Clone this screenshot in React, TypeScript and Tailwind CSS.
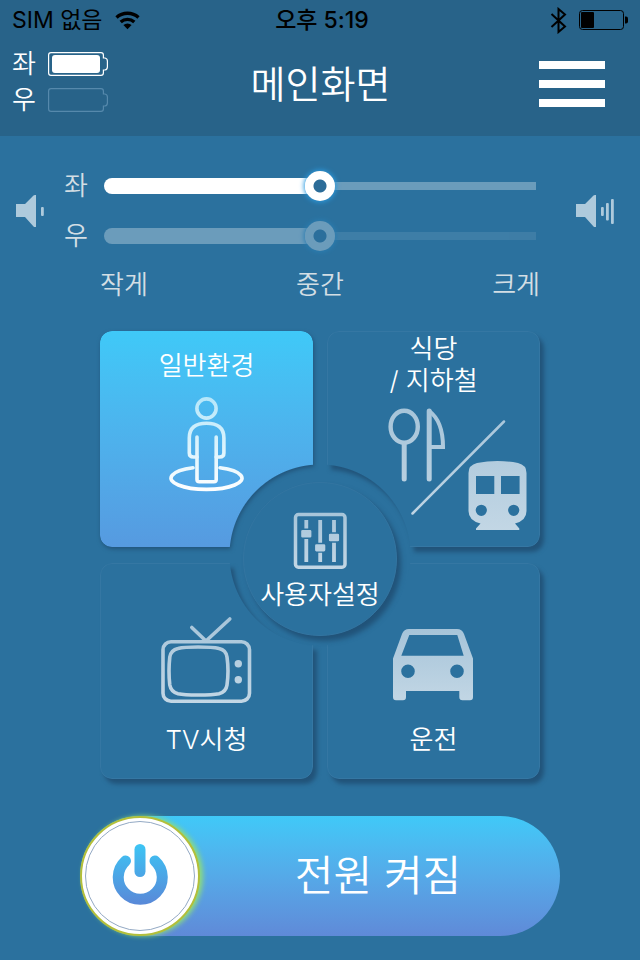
import { useState, type ReactNode } from 'react'
import clsx from 'clsx'

interface IconProps {
  id: string
  width: number
  height: number
  from?: string
  to?: string
  children: (paint: string) => ReactNode
}

// Icon with a vertical gradient shared by all of its strokes and fills
function Icon({ id, width, height, from = '#a6c4d9', to = '#c3d7e5', children }: IconProps) {
  return (
    <svg
      width={width}
      height={height}
      viewBox={`0 0 ${width} ${height}`}
      fill="none"
      strokeLinecap="round"
      strokeLinejoin="round"
      aria-hidden="true"
      className="shrink-0"
    >
      <defs>
        <linearGradient id={id} gradientUnits="userSpaceOnUse" x1="0" y1="0" x2="0" y2={height}>
          <stop stopColor={from} />
          <stop offset="1" stopColor={to} />
        </linearGradient>
      </defs>
      {children(`url(#${id})`)}
    </svg>
  )
}

function PersonIcon() {
  return (
    <Icon id="person" width={76} height={96} from="#b4e6fa" to="#ffffff">
      {(paint) => (
        <g stroke={paint} strokeWidth="3.6">
          <circle cx="37.5" cy="12.5" r="9.6" />
          <path d="M28 61H24.5Q20.300 61 20.300 57V42C20.300 31.500 26.500 27.200 37.500 27.200S54.900 31.500 54.900 42V57Q54.900 61 50.700 61H47.200" />
          <path d="M28 41V83.500Q28 85.800 30.300 85.800H44.900Q47.200 85.800 47.200 83.500V41" />
          <path d="M24 71.800A35.500 11.200 0 1 0 51 71.800" />
        </g>
      )}
    </Icon>
  )
}

function DiningSubwayIcon() {
  return (
    <Icon id="dining" width={144} height={128}>
      {(paint) => (
        <>
          <g stroke={paint} strokeWidth="4.4">
            <ellipse cx="18.200" cy="21.700" rx="13.600" ry="16" />
            <path d="M18.200 38.500V74" strokeWidth="5" />
            <path d="M43.200 6V74" strokeWidth="5" />
            <path d="M43.200 6C52 12.500 57 25.500 57 42H43.200" strokeWidth="4" strokeLinejoin="miter" />
          </g>
          <path d="M118 16.500L26.500 108.500" stroke={paint} strokeWidth="2.500" />
          <path
            fill={paint}
            fillRule="evenodd"
            d="M82.500 68Q82.500 60 91 58Q111.500 54.200 132 58Q140.500 60 140.500 68V106Q140.500 115.500 129 118.500L133.300 123.500V125H90V123.500L94.500 118.500Q82.500 115.500 82.500 106ZM90 71V89H108.300V71ZM115 71V89H133.600V71ZM89.700 105.300a5.600 5.600 0 1 0 11.200 0a5.600 5.600 0 1 0 -11.200 0ZM122.100 105.300a5.600 5.600 0 1 0 11.200 0a5.600 5.600 0 1 0 -11.200 0Z"
          />
        </>
      )}
    </Icon>
  )
}

function TvIcon() {
  return (
    <Icon id="tv" width={92} height={88}>
      {(paint) => (
        <>
          <g stroke={paint} strokeWidth="3.600">
            <path d="M30.800 11.500L45 25L68.800 3" />
            <rect x="2" y="25.800" width="86.500" height="59.400" rx="8" />
            <path d="M37 31Q52 31 58 32.500Q65 34 66 41Q67 48 67 55Q67 62 66 69Q65 76 58 77.700Q52 79 37 79Q23 79 17 77.700Q10 76 8.800 69Q8 62 8 55Q8 48 8.800 41Q10 34 17 32.500Q23 31 37 31Z" />
          </g>
          <circle cx="77.300" cy="47.700" r="3.700" fill={paint} />
          <circle cx="77.300" cy="63.700" r="3.700" fill={paint} />
        </>
      )}
    </Icon>
  )
}

function CarIcon() {
  return (
    <Icon id="car" width={82} height={76}>
      {(paint) => (
        <path
          fill={paint}
          fillRule="evenodd"
          d="M0 30.500L9 6Q11 1 16 1H64Q69 1 71 6L80 30.500V69Q80 72.300 77 72.300H69.500Q66.300 72.300 66.300 69V63H13V69Q13 72.300 10 72.300H3Q0 72.300 0 69ZM16.300 7L8.300 27.800H70.700L64.300 7ZM8.200 43.300a6.800 6.800 0 1 0 13.600 0a6.800 6.800 0 1 0 -13.600 0ZM57.200 43.300a6.800 6.800 0 1 0 13.600 0a6.800 6.800 0 1 0 -13.600 0Z"
        />
      )}
    </Icon>
  )
}

function EqualizerIcon() {
  return (
    <Icon id="equalizer" width={56} height={60}>
      {(paint) => (
        <>
          <rect x="3.500" y="3.500" width="49.500" height="52.700" rx="3" stroke={paint} strokeWidth="3.500" />
          <path d="M14.300 9V51M28.200 9V51M42 9V51" stroke={paint} strokeWidth="3.800" strokeLinecap="butt" />
          <g fill={paint} stroke="#2b719e" strokeWidth="1.400">
            <rect x="8.500" y="18.300" width="11.600" height="9" rx="2" />
            <rect x="22.400" y="32.500" width="11.600" height="8.600" rx="2" />
            <rect x="36.200" y="22" width="11.600" height="9" rx="2" />
          </g>
        </>
      )}
    </Icon>
  )
}

function PowerIcon() {
  return (
    <Icon id="power" width={56} height={66} from="#3cc6f5" to="#5b84d6">
      {(paint) => (
        <g stroke={paint} strokeWidth="11">
          <path d="M28 6.500V28.500" />
          <path d="M13.500 18A22 22 0 1 0 43 18" />
        </g>
      )}
    </Icon>
  )
}

function Speaker({ loud = false }: { loud?: boolean }) {
  return (
    <svg
      width={loud ? 40 : 28}
      height="32"
      viewBox={loud ? '0 0 40 32' : '0 0 28 32'}
      fill="#aecadc"
      aria-hidden="true"
      className="shrink-0"
    >
      <path d="M0 9H9L17.500 .500Q18 0 19 0H20V32H19Q18 32 17.500 31.500L9 22H0Z" />
      <rect x="25" y="12" width="2.800" height="9" rx="1" />
      {loud && (
        <>
          <rect x="30" y="8" width="2.800" height="17.500" rx="1" />
          <rect x="35" y="4" width="2.800" height="25" rx="1" />
        </>
      )}
    </svg>
  )
}

function StatusBar() {
  return (
    <div className="grid h-10 grid-cols-[1fr_auto_1fr] items-center px-3 text-[23px] leading-8 font-normal text-black">
      <div className="flex items-center gap-3">
        <span>SIM 없음</span>
        <svg width="26" height="20" viewBox="0 0 26 20" fill="none" stroke="#000" strokeWidth="3.400" aria-hidden="true">
          <path d="M1.500 7.500A16.500 16.500 0 0 1 23.500 7.500" />
          <path d="M5.700 12A10.200 10.200 0 0 1 19.300 12" />
          <path d="M12.500 19.200L8.400 15A6 6 0 0 1 16.600 15Z" fill="#000" stroke="none" />
        </svg>
      </div>
      <span className="pl-1 font-medium">오후 5:19</span>
      <div className="flex items-center justify-end gap-3">
        <svg width="17" height="27" viewBox="0 0 17 27" fill="none" stroke="#000" strokeWidth="2" aria-hidden="true">
          <path d="M1.500 7L15 19.500L8.500 25V2L15 7.500L1.500 20" />
        </svg>
        <svg width="49" height="20" viewBox="0 0 49 20" aria-hidden="true">
          <rect x=".500" y=".500" width="44" height="19" rx="3" fill="none" stroke="#000" />
          <rect x="2" y="2" width="13" height="16" rx="1" fill="#000" />
          <path d="M46 6.500H47Q49 6.500 49 8.500V11.500Q49 13.500 47 13.500H46Z" />
        </svg>
      </div>
    </div>
  )
}

function BatteryRow({ label, full = false }: { label: string; full?: boolean }) {
  return (
    <div className="flex items-center gap-3">
      <span className="w-6">{label}</span>
      <svg width="60" height="24" viewBox="0 0 60 24" aria-hidden="true">
        <path
          d="M3 .600H53Q55.400 .600 55.400 3V6H57Q59.400 6.500 59.400 9V15Q59.400 17.500 57 18H55.400V21Q55.400 23.400 53 23.400H3Q.600 23.400 .600 21V3Q.600 .600 3 .600Z"
          fill="none"
          stroke={full ? '#fff' : '#5689ac'}
          strokeWidth="1.200"
        />
        {full && <rect x="4" y="3" width="48" height="18" rx="3" fill="#fff" />}
      </svg>
    </div>
  )
}

interface VolumeSliderProps {
  label: string
  id: string
  dimmed?: boolean
}

function VolumeSlider({ label, id, dimmed = false }: VolumeSliderProps) {
  const [value, setValue] = useState(50)

  return (
    <div className="flex h-[50px] items-center gap-4">
      <label htmlFor={id} className="w-6">
        {label}
      </label>
      <div className={clsx('relative flex flex-1 items-center', dimmed && 'opacity-30')}>
        <div className="h-4 rounded-l-full bg-white" style={{ width: `${value}%` }} />
        <div className="h-2 flex-1 bg-white/30" />
        <input
          id={id}
          type="range"
          min={0}
          max={100}
          value={value}
          onChange={(e) => setValue(Number(e.target.value))}
          className="absolute inset-x-0 h-8 w-full cursor-pointer appearance-none bg-transparent [&::-webkit-slider-thumb]:size-[30px] [&::-webkit-slider-thumb]:appearance-none [&::-webkit-slider-thumb]:rounded-full [&::-webkit-slider-thumb]:bg-[radial-gradient(circle,#2b6c98_6px,#ffffff_7px)] [&::-webkit-slider-thumb]:shadow-[0_0_5px_1px_#2a9be0]"
        />
      </div>
    </div>
  )
}

interface ModeCardProps {
  cell: string
  // Cuts the corner that faces the round button in the middle
  mask: string
  content: string
  active: boolean
  onSelect: () => void
  children: ReactNode
}

function ModeCard({ cell, mask, content, active, onSelect, children }: ModeCardProps) {
  return (
    <button
      type="button"
      aria-pressed={active}
      onClick={onSelect}
      className={clsx('grid cursor-pointer grid-cols-1 grid-rows-1', cell)}
    >
      <span
        className={clsx(
          'col-start-1 row-start-1 grid',
          active ? 'drop-shadow-[1px_2px_2px_#215379]' : 'drop-shadow-[4px_5px_2px_#215379]',
        )}
      >
        <span
          className={clsx(
            'rounded-xl',
            mask,
            active ? 'bg-linear-to-b from-[#3fc9f8] to-[#569ae0]' : 'border border-[#3577a3] bg-[#2b719e]',
          )}
        />
      </span>
      <span className={clsx('relative col-start-1 row-start-1 flex flex-col items-center', content)}>{children}</span>
    </button>
  )
}

export default function App() {
  const [mode, setMode] = useState('general')
  const [power, setPower] = useState(true)

  return (
    <div className="min-h-screen bg-[#2b719e] font-['Inter','Noto_Sans_CJK_KR',sans-serif] text-[26px] leading-8 font-[350] text-white">
      <header className="bg-[#286389]">
        <StatusBar />
        <div className="grid h-24 grid-cols-[1fr_auto_1fr] items-center pr-[35px] pb-2 pl-3">
          <div className="self-start pt-1.5 leading-9">
            <BatteryRow label="좌" full />
            <BatteryRow label="우" />
          </div>
          <h1 className="pl-6 text-[38px] leading-10">메인화면</h1>
          <button type="button" aria-label="메뉴" className="flex cursor-pointer flex-col gap-[11px] justify-self-end">
            <span className="h-2 w-[66px] bg-white" />
            <span className="h-2 w-[66px] bg-white" />
            <span className="h-2 w-[66px] bg-white" />
          </button>
        </div>
      </header>

      <main>
        <section className="flex items-center pt-[25px] pr-6 pl-4 text-[#d3dee4]">
          <Speaker />
          <div className="mr-10 ml-5 flex-1">
            <VolumeSlider id="volume-left" label="좌" />
            <VolumeSlider id="volume-right" label="우" dimmed />
          </div>
          <Speaker loud />
        </section>

        <div className="mt-2 flex justify-between px-[100px] text-[#d3dee4]">
          <span>작게</span>
          <span>중간</span>
          <span>크게</span>
        </div>

        <section className="mx-[100px] mt-[30px] grid grid-cols-2 grid-rows-[216px_216px] gap-x-[14px] gap-y-4">
          <ModeCard
            cell="col-start-1 row-start-1"
            mask="[mask-image:radial-gradient(circle_at_calc(100%+7px)_calc(100%+8px),transparent_90px,black_91px)]"
            content="gap-[14px] pt-[19px]"
            active={mode === 'general'}
            onSelect={() => setMode('general')}
          >
            <span>일반환경</span>
            <PersonIcon />
          </ModeCard>
          <ModeCard
            cell="col-start-2 row-start-1"
            mask="[mask-image:radial-gradient(circle_at_-7px_calc(100%+8px),transparent_90px,black_91px)]"
            content="gap-2 pt-[2px]"
            active={mode === 'dining'}
            onSelect={() => setMode('dining')}
          >
            <span>
              식당
              <br />/ 지하철
            </span>
            <span className="mr-[10px] self-end">
              <DiningSubwayIcon />
            </span>
          </ModeCard>
          <ModeCard
            cell="col-start-1 row-start-2"
            mask="[mask-image:radial-gradient(circle_at_calc(100%+7px)_-8px,transparent_90px,black_91px)]"
            content="justify-end gap-5 pb-[23px]"
            active={mode === 'tv'}
            onSelect={() => setMode('tv')}
          >
            <TvIcon />
            <span>TV시청</span>
          </ModeCard>
          <ModeCard
            cell="col-start-2 row-start-2"
            mask="[mask-image:radial-gradient(circle_at_-7px_-8px,transparent_90px,black_91px)]"
            content="justify-end gap-5 pb-[23px]"
            active={mode === 'driving'}
            onSelect={() => setMode('driving')}
          >
            <CarIcon />
            <span>운전</span>
          </ModeCard>

          <button
            type="button"
            className="relative col-span-full col-start-1 row-span-2 row-start-1 mt-2 flex size-[154px] cursor-pointer flex-col items-center gap-2 place-self-center rounded-full border border-[#3375a1] bg-[#2b719e] pt-7 shadow-[4px_5px_5px_#215379]"
          >
            <EqualizerIcon />
            <span className="whitespace-nowrap">사용자설정</span>
          </button>
        </section>

        <div className="px-20 pt-[37px] pb-6">
          <button
            type="button"
            aria-pressed={power}
            onClick={() => setPower(!power)}
            className="flex h-[120px] w-full cursor-pointer items-center rounded-full bg-linear-to-b from-[#3fc9f8] to-[#5f8ad8] text-[42px] leading-[60px]"
          >
            <span className="flex size-[120px] shrink-0 items-center justify-center rounded-full border-2 border-[#b3bf3a] bg-white shadow-[3px_0_5px_#8edc7c]">
              <span className="flex size-[110px] items-center justify-center rounded-full border border-[#93a9c4]">
                <PowerIcon />
              </span>
            </span>
            <span className="flex-1 pr-1 text-center">{power ? '전원 켜짐' : '전원 꺼짐'}</span>
          </button>
        </div>
      </main>
    </div>
  )
}
